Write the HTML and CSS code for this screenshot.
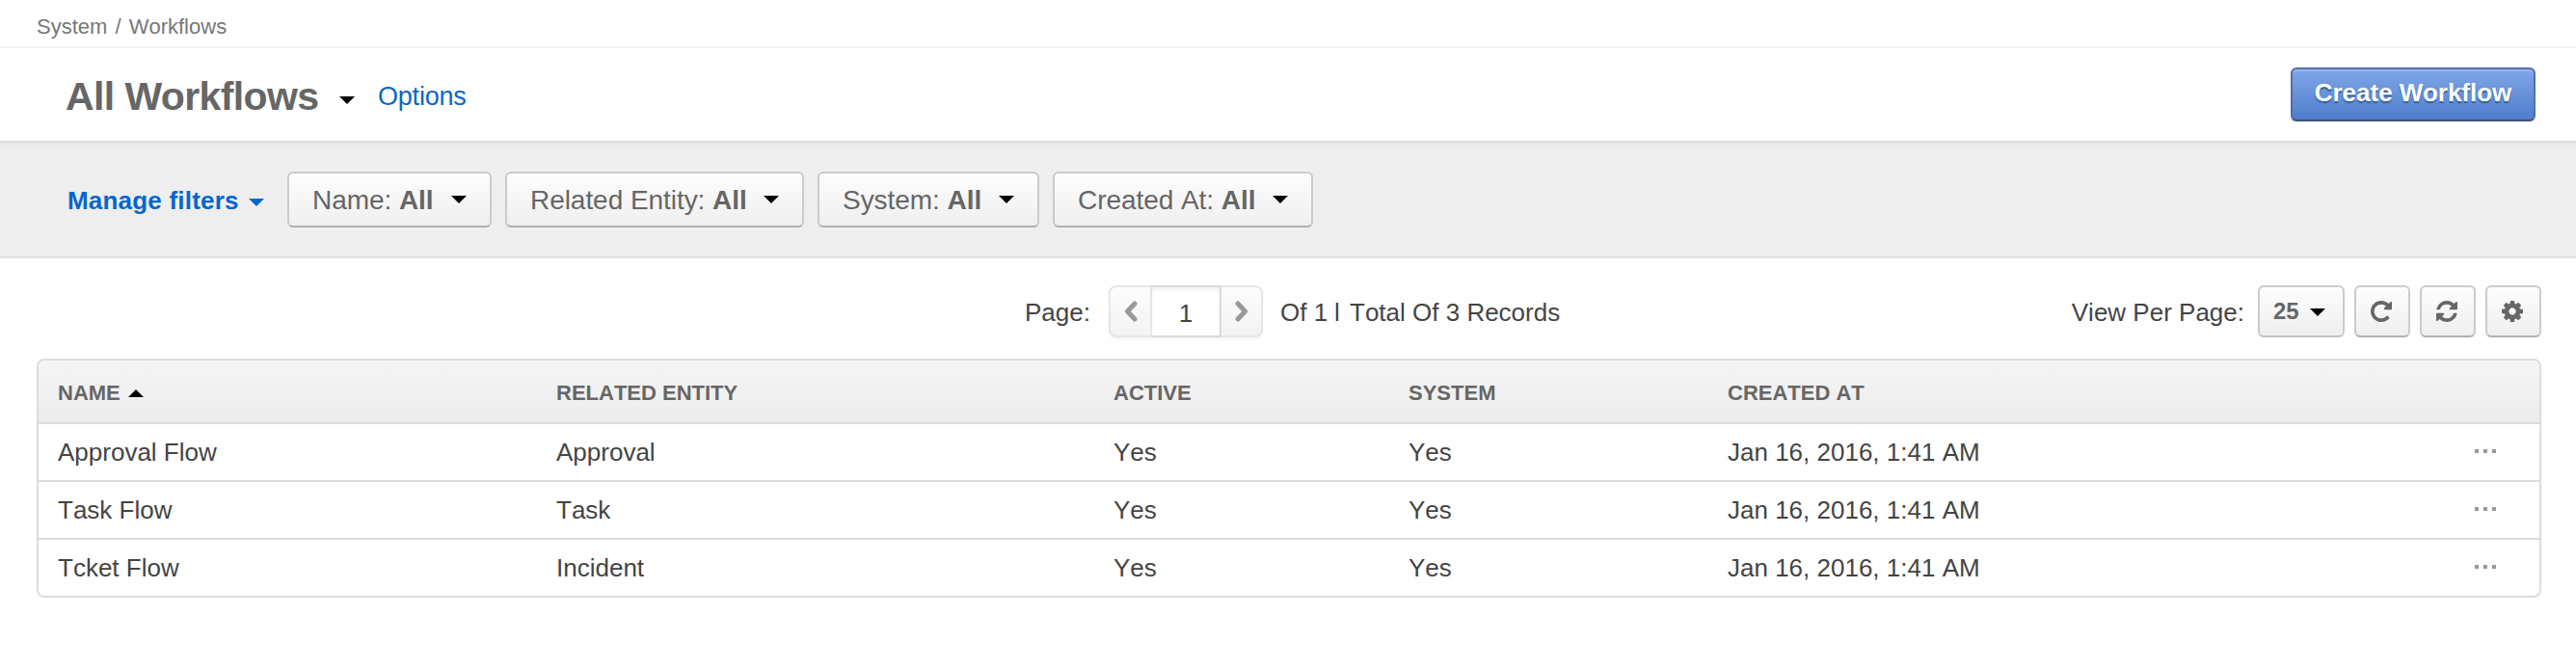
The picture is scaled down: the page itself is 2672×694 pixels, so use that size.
FILE: index.html
```html
<!DOCTYPE html>
<html lang="en">
<head>
<meta charset="utf-8">
<title>All Workflows</title>
<link rel="stylesheet" href="styles.css">
</head>
<body>
<nav class="breadcrumb">System / Workflows</nav>
<header class="page-header">
  <h1 class="title">All Workflows</h1>
  <i class="caret title-caret"></i>
  <a class="options">Options</a>
  <button class="primary">Create Workflow</button>
</header>
<section class="filters">
  <a class="manage">Manage filters</a>
  <i class="caret caret-blue"></i>
  <div class="filter-list">
    <button class="filter f-name"><span class="f-label">Name: <b>All</b></span><i class="caret"></i></button>
    <button class="filter f-entity"><span class="f-label">Related Entity: <b>All</b></span><i class="caret"></i></button>
    <button class="filter f-system"><span class="f-label">System: <b>All</b></span><i class="caret"></i></button>
    <button class="filter f-created"><span class="f-label">Created At: <b>All</b></span><i class="caret"></i></button>
  </div>
</section>
<section class="toolbar">
  <div class="pager">
    <span class="page-label">Page:</span>
    <div class="page-group">
      <span class="step"><svg width="14" height="22" viewBox="0 0 14 22"><path d="M11 3L3.500 11l7.500 8"/></svg></span>
      <span class="page-input">1</span>
      <span class="step"><svg width="14" height="22" viewBox="0 0 14 22"><path d="M3 3L10.500 11L3 19"/></svg></span>
    </div>
    <span class="of">Of 1</span><span class="bar">l</span><span class="total">Total Of 3 Records</span>
  </div>
  <div class="tools">
    <span class="vpp">View Per Page:</span>
    <button class="size"><b>25</b><i class="caret"></i></button>
    <button class="tool"><svg viewBox="128 128 1536 1536"><path d="M1664 256v448q0 26-19 45t-45 19h-448q-42 0-59-40-17-39 14-69l138-138q-148-137-349-137-104 0-198.500 40.500t-163.500 109.500-109.500 163.500-40.500 198.500 40.500 198.500 109.500 163.500 163.500 109.500 198.500 40.500q119 0 225-52t179-147q7-10 23-12 15 0 25 9l137 138q9 8 9.500 20.500t-7.500 22.500q-109 132-264 204.500t-327 72.500q-156 0-298-61t-245-164-164-245-61-298 61-298 164-245 245-164 298-61q147 0 284.500 55.500t244.500 156.500l130-129q29-31 70-14 39 17 39 59z"/></svg></button>
    <button class="tool"><svg viewBox="128 128 1536 1536"><path d="M1639 1056q0 5-1 7-64 268-268 434.500t-478 166.500q-146 0-282.500-55t-243.500-157l-129 129q-19 19-45 19t-45-19-19-45v-448q0-26 19-45t45-19h448q26 0 45 19t19 45-19 45l-137 137q71 66 161 102t187 36q134 0 250-65t186-179q11-17 53-117 8-23 30-23h192q13 0 22.500 9.500t9.500 22.500zm25-800v448q0 26-19 45t-45 19h-448q-26 0-45-19t-19-45 19-45l138-138q-148-137-349-137-134 0-250 65t-186 179q-11 17-53 117-8 23-30 23h-199q-13 0-22.500-9.500t-9.500-22.500v-7q65-268 270-434.500t480-166.500q146 0 284 55.500t245 156.500l130-129q19-19 45-19t45 19 19 45z"/></svg></button>
    <button class="tool"><svg viewBox="128 128 1536 1536"><path d="M1152 896q0-106-75-181t-181-75-181 75-75 181 75 181 181 75 181-75 75-181zm512-109v222q0 12-8 23t-20 13l-185 28q-19 54-39 91 35 50 107 138 10 12 10 25t-9 23q-27 37-99 108t-94 71q-12 0-26-9l-138-108q-44 23-91 38-16 136-29 186-7 28-36 28h-222q-14 0-24.500-8.500t-11.500-21.500l-28-184q-49-16-90-37l-141 107q-10 9-25 9-14 0-25-11-126-114-165-168-7-10-7-23 0-12 8-23 15-21 51-66.500t54-70.500q-27-50-41-99l-183-27q-13-2-21-12.500t-8-23.500v-222q0-12 8-23t19-13l186-28q14-46 39-92-40-57-107-138-10-12-10-24 0-10 9-23 26-36 98.500-107.500t94.500-71.500q13 0 26 10l138 107q44-23 91-38 16-136 29-186 7-28 36-28h222q14 0 24.500 8.500t11.500 21.500l28 184q49 16 90 37l142-107q9-9 24-9 13 0 25 10 129 119 165 170 7 8 7 22 0 12-8 23-15 21-51 66.500t-54 70.500q26 50 41 98l183 28q13 2 21 12.500t8 23.500z"/></svg></button>
  </div>
</section>
<main class="grid">
  <div class="row head"><span class="sorted">NAME<i class="caret-up"></i></span><span>RELATED ENTITY</span><span>ACTIVE</span><span>SYSTEM</span><span>CREATED AT</span><span></span></div>
  <div class="row"><span>Approval Flow</span><span>Approval</span><span>Yes</span><span>Yes</span><span>Jan 16, 2016, 1:41 AM</span><span class="dots"><i></i><i></i><i></i></span></div>
  <div class="row"><span>Task Flow</span><span>Task</span><span>Yes</span><span>Yes</span><span>Jan 16, 2016, 1:41 AM</span><span class="dots"><i></i><i></i><i></i></span></div>
  <div class="row"><span>Tcket Flow</span><span>Incident</span><span>Yes</span><span>Yes</span><span>Jan 16, 2016, 1:41 AM</span><span class="dots"><i></i><i></i><i></i></span></div>
</main>
</body>
</html>
```
FILE: styles.css
```css
* { box-sizing: border-box; }
body {
  margin: 0;
  background: #fff;
  color: #444;
  font: 26px/30px "Liberation Sans", Arial, sans-serif;
  font-kerning: none;
  white-space: nowrap;
  overflow: hidden;
}
button {
  font: inherit;
  font-kerning: inherit;
  color: inherit;
  padding: 0;
  margin: 0;
  display: flex;
  align-items: center;
}
.caret {
  width: 0; height: 0; flex: none;
  border: 8px solid transparent;
  border-top-color: #000;
  border-bottom: 0;
}
.breadcrumb {
  height: 50px;
  padding: 13px 0 0 38px;
  border-bottom: 2px solid #f0f0f0;
  font-size: 22px;
  word-spacing: 2px;
  color: #777;
}
.page-header {
  height: 98px;
  display: flex;
  align-items: flex-start;
  padding: 20px 42px 0 68px;
  border-bottom: 2px solid #dedede;
}
.title {
  margin: 6px 0 0;
  width: 284px;
  font-size: 41px;
  line-height: 48px;
  letter-spacing: -0.6px;
  font-kerning: normal;
  color: #666;
}
.title-caret { margin-top: 30px; }
.options { margin: 15px 0 0 24px; font-size: 27px; letter-spacing: -0.2px; color: #0b66c3; }
.primary {
  margin-left: auto;
  width: 254px; height: 56px;
  justify-content: center;
  padding-bottom: 4px;
  border: 2px solid #5270a5;
  border-bottom-color: #3f5478;
  border-radius: 6px;
  background: linear-gradient(#7fa6e8, #4f7dcb);
  box-shadow: inset 0 2px 0 #95b6ee;
  color: #fff;
  font-weight: bold;
  font-kerning: normal;
  text-shadow: 0 2px 1px #35608f;
}
.filters {
  height: 120px;
  display: flex;
  align-items: flex-start;
  padding-left: 70px;
  background: linear-gradient(#e8e8e8, #eee 6px);
  border-bottom: 2px solid #dfdfdf;
}
.manage { margin-top: 45px; width: 188px; font-weight: bold; letter-spacing: 0.2px; color: #0567cb; }
.caret-blue { margin-top: 58px; border-top-color: #0567cb; }
.filter-list { display: flex; gap: 14px; margin: 30px 0 0 24px; }
.filter, .size, .tool {
  border: 2px solid #cbcbcb;
  border-bottom-color: #b0b0b0;
  border-radius: 6px;
  background: linear-gradient(#fdfdfd, #efefef);
  color: #666;
}
.filter { height: 58px; padding: 0 24px; font-size: 28px; justify-content: space-between; letter-spacing: -0.05px; }
.f-label { padding-top: 2px; }
.f-name { width: 212px; }
.f-entity { width: 310px; }
.f-system { width: 230px; }
.f-created { width: 270px; }
.toolbar { height: 104px; padding: 28px 36px 0 1063px; display: flex; align-items: flex-start; }
.pager { display: flex; align-items: center; height: 54px; }
.page-label { width: 87px; padding-top: 1px; }
.page-group {
  display: flex;
  width: 160px; height: 54px;
  border: 2px solid #e6e6e6;
  border-radius: 8px;
  box-shadow: 0 2px 3px rgba(0,0,0,.05);
  background: linear-gradient(#fdfdfd, #f3f3f3);
}
.step { width: 41px; display: flex; align-items: center; justify-content: center; }
.step path { fill: none; stroke: #999; stroke-width: 5; stroke-linecap: round; stroke-linejoin: round; }
.page-input {
  width: 74px; height: 54px; margin-top: -2px;
  border: 2px solid #dadada;
  border-left-color: #e6e6e6;
  background: #fff;
  box-shadow: inset 0 3px 4px rgba(0,0,0,.06);
  line-height: 54px;
  text-align: center;
}
.of { margin-left: 18px; width: 56px; padding-top: 1px; }
.bar { width: 16px; padding-top: 1px; }
.total { padding-top: 1px; }
.tools { margin-left: auto; display: flex; align-items: center; gap: 10px; }
.vpp { margin-right: 4px; padding-top: 1px; }
.size { width: 90px; height: 54px; padding: 0 18px 0 14px; font-size: 24px; justify-content: space-between; border-bottom-color: #c4c4c4; }
.size .caret { margin-top: 2px; }
.tool { width: 58px; height: 54px; justify-content: center; padding: 0 2px 1px 0; }
.tool svg { width: 22px; height: 22px; fill: #666; }
.grid {
  margin: 0 36px 0 38px;
  height: 248px;
  border: 2px solid #dcdcdc;
  border-radius: 8px;
  overflow: hidden;
}
.row {
  display: grid;
  grid-template-columns: 517px 578px 306px 331px 1fr 67px;
  align-items: center;
  height: 60px;
  padding-left: 20px;
  border-bottom: 2px solid #dcdcdc;
}
.row:last-child { border-bottom-color: transparent; }
.head {
  height: 66px;
  padding-top: 4px;
  font-size: 22px;
  font-weight: bold;
  color: #666;
  background: linear-gradient(#f5f5f5, #ececec);
}
.sorted { display: flex; align-items: center; gap: 8px; }
.caret-up { border: 8px solid transparent; border-bottom-color: #000; border-top: 0; }
.dots { display: flex; gap: 5px; padding-bottom: 2px; }
.dots i { width: 4px; height: 4px; background: #999; }
```
